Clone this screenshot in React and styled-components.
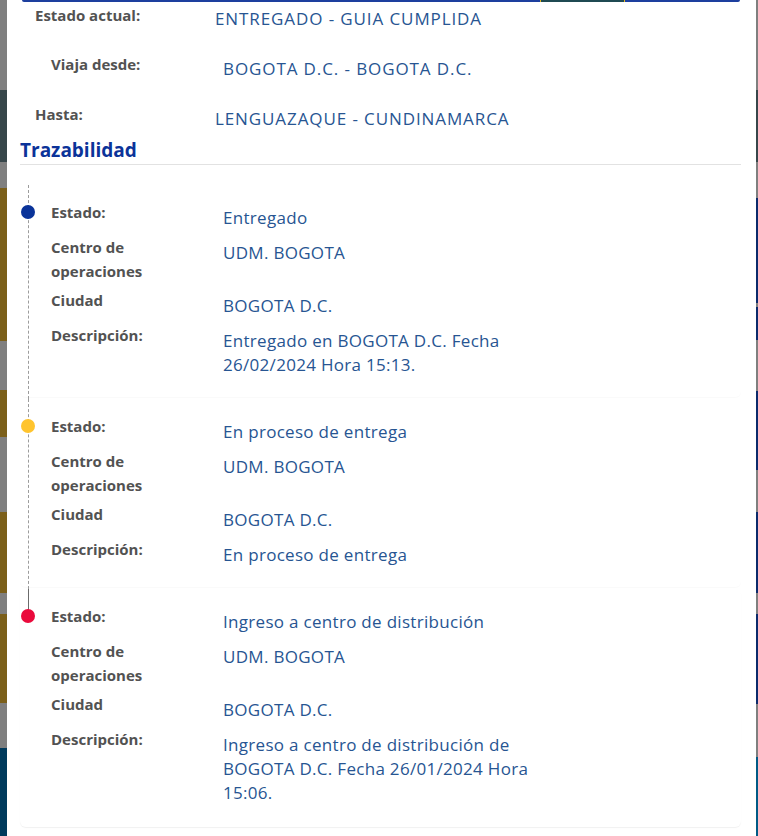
import React from "react";
import styled, { createGlobalStyle } from "styled-components";

const GlobalStyle = createGlobalStyle`
  html, body { margin: 0; padding: 0; }
  body {
    background: #7f7f7f;
    font-family: "Open Sans", "Noto Sans", sans-serif;
  }
`;

const Page = styled.div`
  display: flex;
  height: 836px;
  overflow: hidden;
`;

const Strip = styled.div`
  display: flex;
  flex-direction: column;
  width: ${(p) => p.$w}px;
  flex-shrink: 0;
`;

const Band = styled.div`
  height: ${(p) => p.$h}px;
  background: ${(p) => p.$c};
  flex-shrink: 0;
`;

const Modal = styled.main`
  flex: 1;
  background: #ffffff;
  padding: 0 15px 0 13px;
  display: flex;
  flex-direction: column;
  min-width: 0;
`;

const TopEdge = styled.div`
  display: grid;
  grid-template-columns: 518px 85px 1fr;
  height: 2px;
  margin: 0 1px 0 2px;
`;

const EdgeLine = styled.div`
  background: #1d3f9e;
  border-radius: ${(p) => p.$r || "0"};
`;

const EdgeSliver = styled.div`
  background: #1f4a52;
  border-left: 1px solid #e7b722;
  border-right: 1px solid #e7b722;
`;

const InfoList = styled.section`
  display: flex;
  flex-direction: column;
  gap: 21px;
  padding-top: 1px;
`;

const InfoRow = styled.div`
  display: flex;
  padding-left: ${(p) => p.$indent}px;
`;

const Label = styled.div`
  width: ${(p) => p.$w}px;
  flex-shrink: 0;
  font-size: 15px;
  font-weight: 700;
  line-height: 24px;
  color: #525252;
`;

const Value = styled.div`
  padding-top: ${(p) => p.$pt ?? 6}px;
  font-size: 17px;
  line-height: 24px;
  letter-spacing: ${(p) => p.$ls ?? 0.3}px;
  color: #275592;
`;

const SectionTitle = styled.h2`
  margin: 7px 0 0 0;
  font-size: 19px;
  font-weight: 700;
  line-height: 24px;
  color: #0b3399;
`;

const Divider = styled.hr`
  margin: 2px 0 0 0;
  border: 0;
  height: 1px;
  background: #e2e2e2;
`;

const Timeline = styled.section`
  display: flex;
  flex-direction: column;
  gap: 2px;
  margin-top: 20px;
`;

const ItemCard = styled.article`
  position: relative;
  padding: 15px 0 ${(p) => (p.$last ? 22 : 20)}px 31px;
  border-radius: 6px;
  box-shadow: 0 1px 1px rgba(0, 0, 0, ${(p) => (p.$last ? 0.06 : 0.025)});
`;

const Rail = styled.span`
  position: absolute;
  left: 8px;
  top: 0;
  ${(p) => (p.$last ? "height: 21px;" : "bottom: -2px;")}
  border-left: 1px ${(p) => (p.$last ? "solid #6b6b6b" : "dashed #9c9c9c")};
`;

const Dot = styled.span`
  position: absolute;
  left: 1px;
  top: 20px;
  width: 14px;
  height: 14px;
  border-radius: 50%;
  background: ${(p) => p.$c};
`;

const FieldRow = styled.div`
  display: grid;
  grid-template-columns: 172px 325px;
  & + & {
    margin-top: 5px;
  }
`;

const info = [
  { label: "Estado actual:", value: "ENTREGADO - GUIA CUMPLIDA", indent: 15, w: 180, pt: 4 },
  { label: "Viaja desde:", value: "BOGOTA D.C. - BOGOTA D.C.", indent: 31, w: 172, pt: 5 },
  { label: "Hasta:", value: "LENGUAZAQUE - CUNDINAMARCA", indent: 15, w: 180, pt: 5 },
];

const items = [
  {
    color: "#0a3399",
    estado: "Entregado",
    centro: "UDM. BOGOTA",
    ciudad: "BOGOTA D.C.",
    desc: "Entregado en BOGOTA D.C. Fecha 26/02/2024 Hora 15:13.",
  },
  {
    color: "#ffc42e",
    estado: "En proceso de entrega",
    centro: "UDM. BOGOTA",
    ciudad: "BOGOTA D.C.",
    desc: "En proceso de entrega",
  },
  {
    color: "#ea0a3c",
    estado: "Ingreso a centro de distribución",
    centro: "UDM. BOGOTA",
    ciudad: "BOGOTA D.C.",
    desc: "Ingreso a centro de distribución de BOGOTA D.C. Fecha 26/01/2024 Hora 15:06.",
    last: true,
  },
];

const leftBands = [
  [90, "#7f7f7f"], [72, "#37464a"], [26, "#7f7f7f"], [153, "#7b5f1a"],
  [49, "#7f7f7f"], [47, "#7b5f1a"], [75, "#7f7f7f"], [81, "#7b5f1a"],
  [21, "#7f7f7f"], [89, "#7b5f1a"], [45, "#7f7f7f"], [88, "#003a5c"],
];

const rightBands = [
  [90, "#7f7f7f"], [72, "#37464a"], [36, "#7f7f7f"], [105, "#0b2a6b"],
  [4, "#7f7f7f"], [33, "#0b2a6b"], [51, "#7f7f7f"], [79, "#0b2a6b"],
  [42, "#7f7f7f"], [81, "#0b2a6b"], [21, "#7f7f7f"], [90, "#0b2a6b"],
  [53, "#7f7f7f"], [79, "#005a85"],
];

export default function App() {
  return (
    <>
      <GlobalStyle />
      <Page>
        <Strip $w={7}>
          {leftBands.map(([h, c], i) => (
            <Band key={i} $h={h} $c={c} />
          ))}
        </Strip>
        <Modal>
          <TopEdge>
            <EdgeLine $r="0 0 0 2px" />
            <EdgeSliver />
            <EdgeLine $r="0 0 2px 0" />
          </TopEdge>
          <InfoList>
            {info.map((r) => (
              <InfoRow key={r.label} $indent={r.indent}>
                <Label $w={r.w}>{r.label}</Label>
                <Value $pt={r.pt} $ls={0.9}>{r.value}</Value>
              </InfoRow>
            ))}
          </InfoList>
          <SectionTitle>Trazabilidad</SectionTitle>
          <Divider />
          <Timeline>
            {items.map((it, i) => (
              <ItemCard key={i} $last={it.last}>
                <Rail $last={it.last} />
                <Dot $c={it.color} />
                <FieldRow>
                  <Label>Estado:</Label>
                  <Value>{it.estado}</Value>
                </FieldRow>
                <FieldRow>
                  <Label>
                    Centro de
                    <br />
                    operaciones
                  </Label>
                  <Value>{it.centro}</Value>
                </FieldRow>
                <FieldRow>
                  <Label>Ciudad</Label>
                  <Value>{it.ciudad}</Value>
                </FieldRow>
                <FieldRow>
                  <Label>Descripción:</Label>
                  <Value>{it.desc}</Value>
                </FieldRow>
              </ItemCard>
            ))}
          </Timeline>
        </Modal>
        <Strip $w={2}>
          {rightBands.map(([h, c], i) => (
            <Band key={i} $h={h} $c={c} />
          ))}
        </Strip>
      </Page>
    </>
  );
}
